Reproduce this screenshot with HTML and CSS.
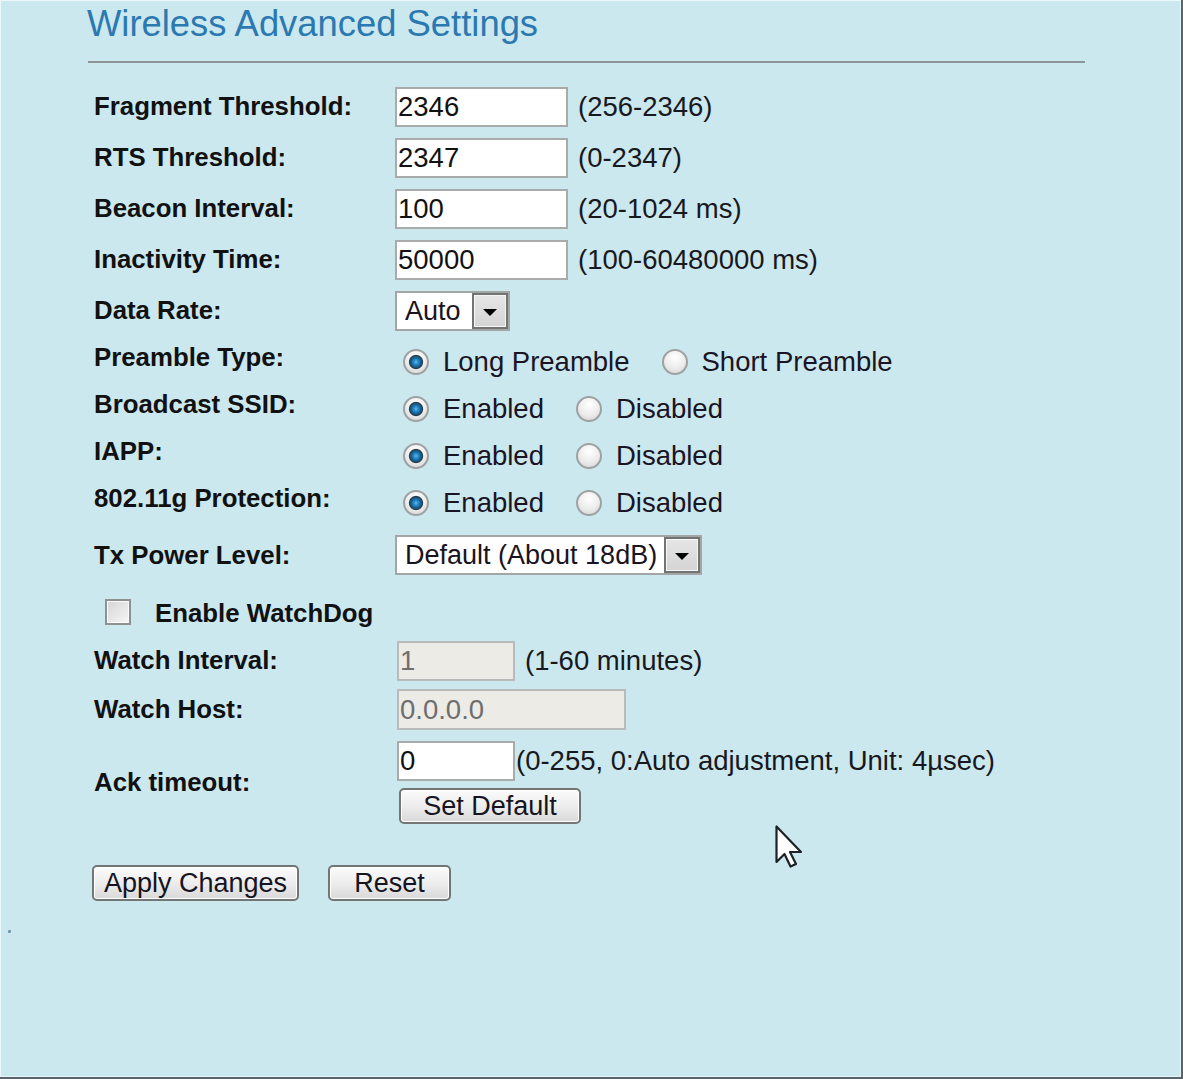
FILE: index.html
```html
<!DOCTYPE html>
<html lang="en">
<head>
<meta charset="utf-8">
<title>Wireless Advanced Settings</title>
<link rel="stylesheet" href="styles.css">
</head>
<body>
<div class="frame">
  <div class="page">
    <h1 class="title">Wireless Advanced Settings</h1>
    <hr class="rule">
    <form class="settings">
      <div class="row r51">
        <label class="label">Fragment Threshold:</label>
        <div class="field"><input class="text" type="text" value="2346"><span class="hint">(256-2346)</span></div>
      </div>
      <div class="row r51">
        <label class="label">RTS Threshold:</label>
        <div class="field"><input class="text" type="text" value="2347"><span class="hint">(0-2347)</span></div>
      </div>
      <div class="row r51">
        <label class="label">Beacon Interval:</label>
        <div class="field"><input class="text" type="text" value="100"><span class="hint">(20-1024 ms)</span></div>
      </div>
      <div class="row r51">
        <label class="label">Inactivity Time:</label>
        <div class="field"><input class="text" type="text" value="50000"><span class="hint">(100-60480000 ms)</span></div>
      </div>
      <div class="row r51">
        <label class="label">Data Rate:</label>
        <div class="field">
          <div class="select rate">
            <select class="select-box"><option>Auto</option></select>
            <span class="select-arrow"></span>
          </div>
        </div>
      </div>
      <div class="row r47 choice">
        <label class="label">Preamble Type:</label>
        <div class="field radios">
          <input class="radio" type="radio" name="preamble" checked><span class="opt wide">Long Preamble</span>
          <input class="radio" type="radio" name="preamble"><span class="opt">Short Preamble</span>
        </div>
      </div>
      <div class="row r47 choice">
        <label class="label">Broadcast SSID:</label>
        <div class="field radios">
          <input class="radio" type="radio" name="ssid" checked><span class="opt wide">Enabled</span>
          <input class="radio" type="radio" name="ssid"><span class="opt">Disabled</span>
        </div>
      </div>
      <div class="row r47 choice">
        <label class="label">IAPP:</label>
        <div class="field radios">
          <input class="radio" type="radio" name="iapp" checked><span class="opt wide">Enabled</span>
          <input class="radio" type="radio" name="iapp"><span class="opt">Disabled</span>
        </div>
      </div>
      <div class="row r47 choice">
        <label class="label">802.11g Protection:</label>
        <div class="field radios">
          <input class="radio" type="radio" name="prot" checked><span class="opt wide">Enabled</span>
          <input class="radio" type="radio" name="prot"><span class="opt">Disabled</span>
        </div>
      </div>
      <div class="row r62">
        <label class="label">Tx Power Level:</label>
        <div class="field">
          <div class="select power">
            <select class="select-box"><option>Default (About 18dB)</option></select>
            <span class="select-arrow"></span>
          </div>
        </div>
      </div>
      <div class="row r51 single">
        <label class="check"><input class="checkbox" type="checkbox"><span class="check-text">Enable WatchDog</span></label>
      </div>
      <div class="row r47">
        <label class="label">Watch Interval:</label>
        <div class="field"><input class="text short off" type="text" value="1" disabled><span class="hint">(1-60 minutes)</span></div>
      </div>
      <div class="row r51">
        <label class="label">Watch Host:</label>
        <div class="field"><input class="text host off" type="text" value="0.0.0.0" disabled></div>
      </div>
      <div class="row r95">
        <label class="label">Ack timeout:</label>
        <div class="field stack">
          <div class="line"><input class="text short" type="text" value="0"><span class="hint tight">(0-255, 0:Auto adjustment, Unit: 4µsec)</span></div>
          <button class="btn set" type="button">Set Default</button>
        </div>
      </div>
      <div class="actions">
        <button class="btn apply" type="button">Apply Changes</button>
        <button class="btn reset" type="reset">Reset</button>
      </div>
    </form>
  </div>
  <span class="speck"></span>
  <svg class="pointer" width="30" height="46" viewBox="0 0 30 46" aria-hidden="true">
    <path d="M1.5 1.5 L1.5 37 L9.5 29 L15.5 41.5 L21 39 L15 27 L26 27 Z" fill="#ffffff" stroke="#1c2228" stroke-width="2.2" stroke-linejoin="round"/>
  </svg>
</div>
</body>
</html>
```
FILE: styles.css
```css
html, body {
  margin: 0;
  padding: 0;
  background: #cbe8ef;
}

body {
  font-family: "Liberation Sans", Arial, sans-serif;
  color: #141414;
}

.frame {
  position: relative;
  box-sizing: border-box;
  width: 1183px;
  height: 1079px;
  background: #cbe8ef;
  border-right: 2px solid #58646a;
  border-bottom: 2px solid #58646a;
  box-shadow: inset 1px 1px 0 #eaf8fb, inset -1px -1px 0 #e4f5f9;
  overflow: hidden;
}

.page {
  padding: 4px 0 0 87px;
}

.title {
  margin: 0;
  font-size: 36.4px;
  line-height: 40px;
  font-weight: normal;
  color: #2b79b0;
}

.rule {
  width: 997px;
  margin: 17px 0 0 1px;
  height: 0;
  border: 0;
  border-top: 2px solid #8d9599;
}

.settings {
  margin-top: 18px;
}

.row {
  display: grid;
  grid-template-columns: 301px auto;
  align-items: center;
  padding-left: 7px;
}

.r51 { height: 51px; }
.r47 { height: 47px; }
.r62 { height: 62px; }
.r95 { height: 95px; }

.label {
  font-size: 25.8px;
  font-weight: bold;
  color: #111;
  white-space: nowrap;
}

.choice .label {
  padding-bottom: 4px;
}

.field {
  display: flex;
  align-items: center;
  font-size: 27.5px;
}

.text {
  box-sizing: border-box;
  width: 173px;
  height: 40px;
  margin: 0;
  padding: 0 0 0 1px;
  border: 2px solid #a9abab;
  background: #ffffff;
  font-family: "Liberation Sans", Arial, sans-serif;
  font-size: 27.5px;
  color: #111;
}

.text.short {
  width: 118px;
  margin-left: 2px;
}

.text.host {
  width: 229px;
  height: 41px;
  margin-left: 2px;
}

.text.off {
  background: #ecebe6;
  border-color: #b9bbbb;
  color: #6e6e6e;
}

.hint {
  margin-left: 10px;
  white-space: nowrap;
  color: #181820;
}

.hint.tight {
  margin-left: 1px;
}

/* drop-down lists */
.select {
  position: relative;
  box-sizing: border-box;
  height: 40px;
  border: 2px solid #a4a6a6;
  background: #ffffff;
}

.select.rate { width: 115px; }
.select.power { width: 307px; }

.select-box {
  appearance: none;
  -webkit-appearance: none;
  box-sizing: border-box;
  width: 100%;
  height: 100%;
  margin: 0;
  padding: 0 0 0 8px;
  border: 0;
  background: transparent;
  font-family: "Liberation Sans", Arial, sans-serif;
  font-size: 27px;
  color: #1a1420;
}

.select-arrow {
  position: absolute;
  top: 0;
  right: 0;
  bottom: 0;
  width: 36px;
  box-sizing: border-box;
  border: 2px solid #727474;
  box-shadow: inset 0 0 0 1px #f6f6f6;
  background: linear-gradient(#e6e6e6, #d4d4d4);
  display: flex;
  align-items: center;
  justify-content: center;
}

.select-arrow::after {
  content: "";
  width: 0;
  height: 0;
  margin-top: 3px;
  border-left: 7px solid transparent;
  border-right: 7px solid transparent;
  border-top: 7px solid #000;
}

/* radio buttons */
.radios {
  padding: 5px 0 0 8px;
}

.radio {
  appearance: none;
  -webkit-appearance: none;
  box-sizing: border-box;
  flex: none;
  width: 26px;
  height: 26px;
  margin: 0;
  border-radius: 50%;
  border: 2px solid #9fa1a1;
  background: radial-gradient(circle at 50% 30%, #ffffff 0, #ececec 55%, #d2d2d2 100%);
}

.radio:checked {
  background:
    radial-gradient(circle at 50% 50%, #5ab8ea 0, #1f7fbf 3px, #145a8a 5.2px, #2b3a44 6.6px, rgba(255,255,255,0) 7.6px),
    radial-gradient(circle at 50% 30%, #ffffff 0, #ececec 55%, #d2d2d2 100%);
}

.opt {
  margin-left: 14px;
  white-space: nowrap;
  color: #1a1424;
}

.opt.wide {
  margin-right: 32px;
}

/* watchdog checkbox */
.single {
  grid-template-columns: auto;
}

.check {
  display: flex;
  align-items: center;
  padding-left: 11px;
}

.checkbox {
  appearance: none;
  -webkit-appearance: none;
  box-sizing: border-box;
  width: 26px;
  height: 26px;
  margin: 0;
  border: 2px solid #8f9191;
  background: linear-gradient(135deg, #d6d6d6, #f6f6f6);
  box-shadow: inset 0 0 0 1px #fbfbfb;
}

.check-text {
  margin-left: 24px;
  padding-top: 4px;
  font-size: 25.8px;
  font-weight: bold;
  color: #111;
}

/* ack timeout stack */
.stack {
  flex-direction: column;
  align-items: flex-start;
  gap: 7px;
}

.line {
  display: flex;
  align-items: center;
}

/* push buttons */
.btn {
  box-sizing: border-box;
  height: 36px;
  margin: 0;
  padding: 0;
  border: 2px solid #747676;
  border-radius: 5px;
  background: linear-gradient(#fbfbfb 0%, #ededed 50%, #d9d9d9 100%);
  box-shadow: inset 0 0 0 1px #ffffff;
  font-family: "Liberation Sans", Arial, sans-serif;
  font-size: 27px;
  color: #161420;
  line-height: 30px;
}

.btn.set {
  width: 182px;
  margin-left: 4px;
}

.actions {
  display: flex;
  gap: 29px;
  margin-top: 35px;
  padding-left: 5px;
}

.btn.apply { width: 207px; }
.btn.reset { width: 123px; }

/* stray mark and mouse pointer over the page */
.speck {
  position: absolute;
  left: 8px;
  top: 930px;
  width: 3px;
  height: 3px;
  background: #6f98ae;
  border-radius: 1px;
}

.pointer {
  position: absolute;
  left: 775px;
  top: 825px;
}
```
